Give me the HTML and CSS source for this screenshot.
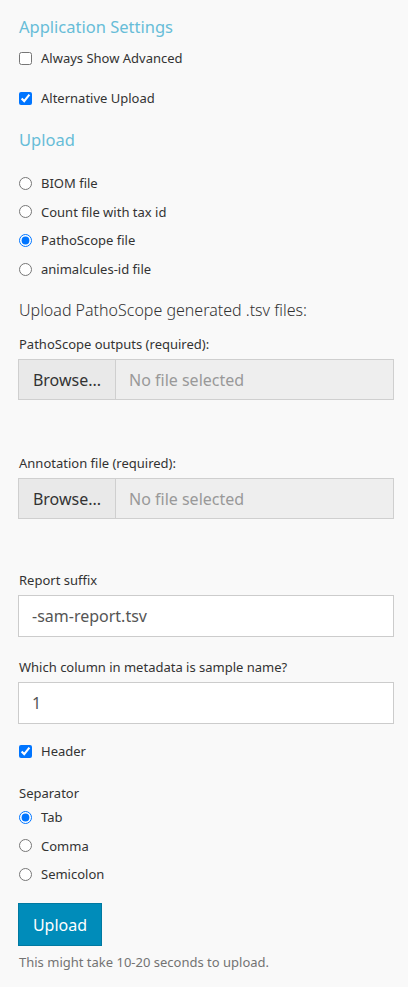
FILE: index.html
```html
<!DOCTYPE html>
<html>
<head>
<meta charset="utf-8">
<link rel="stylesheet" href="styles.css">
</head>
<body>
<div class="panel">
  <h4 class="section first">Application Settings</h4>
  <label class="check c1"><input type="checkbox"><span>Always Show Advanced</span></label>
  <label class="check c2"><input type="checkbox" checked><span>Alternative Upload</span></label>

  <h4 class="section second">Upload</h4>
  <div class="radios top">
    <label class="radio"><input type="radio" name="ft"><span>BIOM file</span></label>
    <label class="radio"><input type="radio" name="ft"><span>Count file with tax id</span></label>
    <label class="radio"><input type="radio" name="ft" checked><span>PathoScope file</span></label>
    <label class="radio"><input type="radio" name="ft"><span>animalcules-id file</span></label>
  </div>

  <p class="lead">Upload PathoScope generated .tsv files:</p>

  <div class="group g1">
    <div class="label">PathoScope outputs (required):</div>
    <div class="file"><span class="browse">Browse...</span><span class="fname">No file selected</span></div>
  </div>

  <div class="group g2">
    <div class="label">Annotation file (required):</div>
    <div class="file"><span class="browse">Browse...</span><span class="fname">No file selected</span></div>
  </div>

  <div class="group g3">
    <div class="label">Report suffix</div>
    <div class="text">-sam-report.tsv</div>
  </div>

  <div class="group g4">
    <div class="label">Which column in metadata is sample name?</div>
    <div class="text">1</div>
  </div>

  <label class="check c3"><input type="checkbox" checked><span>Header</span></label>

  <div class="group g5">
    <div class="label">Separator</div>
    <div class="radios">
      <label class="radio"><input type="radio" name="sep" checked><span>Tab</span></label>
      <label class="radio"><input type="radio" name="sep"><span>Comma</span></label>
      <label class="radio"><input type="radio" name="sep"><span>Semicolon</span></label>
    </div>
  </div>

  <button class="upload">Upload</button>
  <p class="help">This might take 10-20 seconds to upload.</p>
</div>
</body>
</html>
```
FILE: styles.css
```css
html, body {
  margin: 0;
  padding: 0;
  background: #f9f9f9;
}
body {
  font-family: "Noto Sans", "Open Sans", sans-serif;
  font-size: 13px;
  color: #333;
}
.panel {
  padding: 0 14px 20px 18px;
}
.section {
  font-size: 16.5px;
  font-weight: 400;
  line-height: 20px;
  color: #67bdd8;
  margin: 0;
  padding-left: 1px;
}
.section.first { margin-top: 17px; }
.section.second { margin-top: 22px; }
.check, .radio {
  display: flex;
  align-items: center;
  height: 20px;
  line-height: 20px;
}
.check input, .radio input {
  margin: 0 9px 0 1px;
  width: 13px;
  height: 13px;
  accent-color: #0075ff;
}
.c1 { margin-top: 11px; }
.c2 { margin-top: 20px; }
.c3 { margin-top: 17px; }
.radios {
  display: flex;
  flex-direction: column;
  gap: 8.7px;
}
.radios.top { margin-top: 23px; }
.lead {
  margin: 21px 0 0 1px;
  font-size: 16px;
  font-weight: 300;
  line-height: 20px;
  color: #333;
}
.group .label {
  line-height: 20px;
  padding-left: 1px;
}
.g1 { margin-top: 14px; }
.g2 { margin-top: 53px; }
.g3 { margin-top: 51px; }
.g4 { margin-top: 20px; }
.g5 { margin-top: 22px; }
.g5 .radios { margin-top: 4px; }
.file {
  display: flex;
  margin-top: 5px;
  height: 41px;
  box-sizing: border-box;
  border: 1px solid #cfcfcf;
  background: #eeeeee;
  font-size: 16px;
}
.browse {
  width: 97px;
  box-sizing: border-box;
  border-right: 1px solid #cfcfcf;
  background: #e9e9e9;
  color: #333;
  display: flex;
  align-items: center;
  justify-content: center;
}
.fname {
  flex: 1;
  display: flex;
  align-items: center;
  padding-left: 13px;
  color: #999;
}
.text {
  margin-top: 5px;
  height: 42px;
  box-sizing: border-box;
  border: 1px solid #cccccc;
  background: #fff;
  font-size: 16px;
  color: #555;
  display: flex;
  align-items: center;
  padding-left: 13px;
}
.upload {
  display: block;
  margin-top: 19px;
  width: 84px;
  height: 43px;
  border: 1px solid #0079a1;
  background: #008cba;
  color: #fff;
  font-family: "Noto Sans", "Open Sans", sans-serif;
  font-size: 16px;
  padding: 0;
}
.help {
  margin: 6px 0 0 1px;
  line-height: 20px;
  color: #737373;
}
```
